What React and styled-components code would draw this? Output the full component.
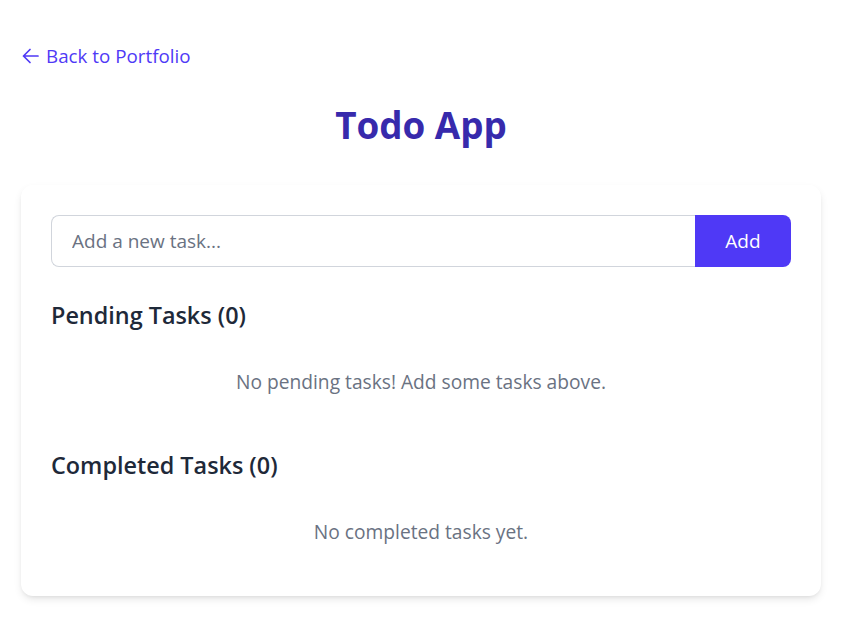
import React, { useState } from 'react';
import styled, { createGlobalStyle } from 'styled-components';

const Global = createGlobalStyle`
  body {
    margin: 0;
    background: #ffffff;
    font-family: "Open Sans", "Noto Sans", sans-serif;
  }
`;

const Page = styled.div`
  padding: 42px 21px 28px;
`;

const BackLink = styled.a`
  display: inline-flex;
  align-items: center;
  gap: 7px;
  padding-left: 1px;
  color: #4f39f6;
  font-size: 18.8px;
  line-height: 28px;
  text-decoration: none;
  cursor: pointer;
`;

const Title = styled.h1`
  margin: 35px 0 40px;
  text-align: center;
  font-size: 36.8px;
  line-height: 40px;
  font-weight: 700;
  color: #372aac;
`;

const Card = styled.div`
  background: #fff;
  border-radius: 12px;
  padding: 30px 30px 29px;
  box-shadow: 0 4px 8px -1px rgba(0, 0, 0, 0.1), 0 2px 4px -2px rgba(0, 0, 0, 0.1);
`;

const InputRow = styled.form`
  display: flex;
  height: 52px;
`;

const Input = styled.input`
  flex: 1;
  min-width: 0;
  padding: 0 20px;
  font-family: inherit;
  font-size: 19px;
  color: #1e2939;
  border: 1px solid #d1d5dc;
  border-right: none;
  border-radius: 8px 0 0 8px;
  outline: none;

  &::placeholder {
    color: #6a7282;
  }
`;

const AddButton = styled.button`
  width: 96px;
  border: none;
  border-radius: 0 8px 8px 0;
  background: #4f39f6;
  color: #fff;
  font-family: inherit;
  font-size: 19px;
  cursor: pointer;
`;

const Section = styled.section`
  margin-top: 32px;
`;

const SectionTitle = styled.h2`
  margin: 0 0 17px;
  font-size: 23.4px;
  line-height: 32px;
  font-weight: 600;
  color: #1e2939;
`;

const Empty = styled.p`
  margin: 0;
  padding: 20px 0 21px;
  text-align: center;
  font-size: 19.2px;
  line-height: 28px;
  color: #6a7282;
`;

const Arrow = () => (
  <svg width="17" height="16" viewBox="0 0 17 16" fill="none" stroke="currentColor" strokeWidth="1.7" strokeLinecap="round" strokeLinejoin="round">
    <path d="M8 1.5 L1.5 8 L8 14.5 M1.5 8 H16" />
  </svg>
);

export default function App() {
  const [text, setText] = useState('');
  const [tasks, setTasks] = useState([]);

  const pending = tasks.filter((t) => !t.done);
  const completed = tasks.filter((t) => t.done);

  const handleSubmit = (e) => {
    e.preventDefault();
    if (!text.trim()) return;
    setTasks([...tasks, { id: Date.now(), text, done: false }]);
    setText('');
  };

  return (
    <>
      <Global />
      <Page>
        <BackLink>
          <Arrow />
          Back to Portfolio
        </BackLink>
        <Title>Todo App</Title>
        <Card>
          <InputRow onSubmit={handleSubmit}>
            <Input
              type="text"
              placeholder="Add a new task..."
              value={text}
              onChange={(e) => setText(e.target.value)}
            />
            <AddButton type="submit">Add</AddButton>
          </InputRow>
          <Section>
            <SectionTitle>Pending Tasks ({pending.length})</SectionTitle>
            <Empty>No pending tasks! Add some tasks above.</Empty>
          </Section>
          <Section>
            <SectionTitle>Completed Tasks ({completed.length})</SectionTitle>
            <Empty>No completed tasks yet.</Empty>
          </Section>
        </Card>
      </Page>
    </>
  );
}
